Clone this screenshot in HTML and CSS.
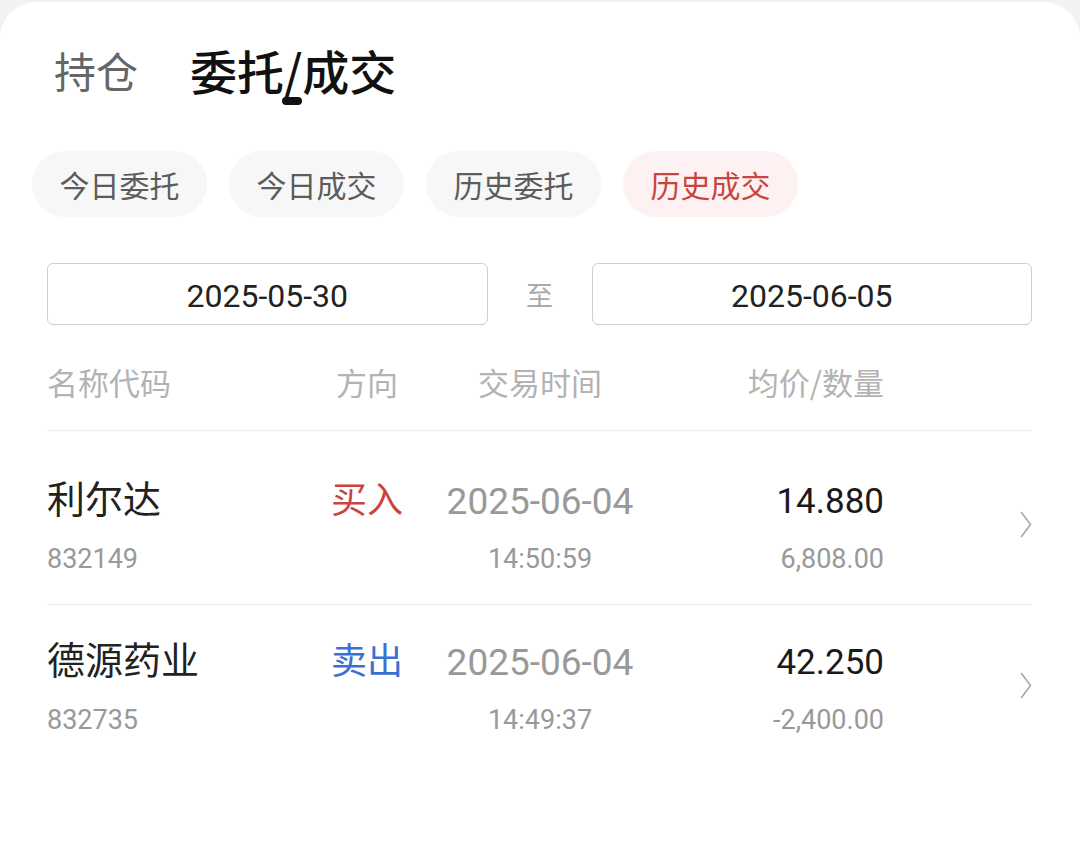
FILE: index.html
```html
<!DOCTYPE html>
<html lang="zh-CN">
<head>
    <meta charset="UTF-8">
    <meta name="viewport" content="width=device-width, initial-scale=1.0">
    <title>委托/成交</title>
    <link rel="stylesheet" href="styles.css">
</head>
<body>
    <div class="card">
        <div class="tabs">
            <div class="tab">持仓</div>
            <div class="tab active">委托/成交</div>
        </div>

        <div class="chips">
            <div class="chip">今日委托</div>
            <div class="chip">今日成交</div>
            <div class="chip">历史委托</div>
            <div class="chip active">历史成交</div>
        </div>

        <div class="date-range">
            <div class="date-box">2025-05-30</div>
            <div class="date-sep">至</div>
            <div class="date-box">2025-06-05</div>
        </div>

        <div class="table-head">
            <div class="col-name">名称代码</div>
            <div class="col-dir">方向</div>
            <div class="col-time">交易时间</div>
            <div class="col-price">均价/数量</div>
            <div></div>
        </div>

        <div class="list">
            <div class="row">
                <div class="col-name">
                    <div class="name">利尔达</div>
                    <div class="sub">832149</div>
                </div>
                <div class="col-dir"><span class="dir buy">买入</span></div>
                <div class="col-time">
                    <div class="date">2025-06-04</div>
                    <div class="sub">14:50:59</div>
                </div>
                <div class="col-price">
                    <div class="price">14.880</div>
                    <div class="sub">6,808.00</div>
                </div>
                <div class="col-arrow">
                    <svg width="12" height="27" viewBox="0 0 12 27"><path d="M1.5 1.5 L10.5 13.5 L1.5 25.5" fill="none" stroke="#a8a8a8" stroke-width="1.6" stroke-linecap="round" stroke-linejoin="round"/></svg>
                </div>
            </div>
            <div class="row">
                <div class="col-name">
                    <div class="name">德源药业</div>
                    <div class="sub">832735</div>
                </div>
                <div class="col-dir"><span class="dir sell">卖出</span></div>
                <div class="col-time">
                    <div class="date">2025-06-04</div>
                    <div class="sub">14:49:37</div>
                </div>
                <div class="col-price">
                    <div class="price">42.250</div>
                    <div class="sub">-2,400.00</div>
                </div>
                <div class="col-arrow">
                    <svg width="12" height="27" viewBox="0 0 12 27"><path d="M1.5 1.5 L10.5 13.5 L1.5 25.5" fill="none" stroke="#a8a8a8" stroke-width="1.6" stroke-linecap="round" stroke-linejoin="round"/></svg>
                </div>
            </div>
        </div>
    </div>
</body>
</html>
```

FILE: styles.css
```css
body {
    margin: 0;
    background: #f1f2f4;
    font-family: "Noto Sans CJK SC", "Noto Sans", sans-serif;
}
.card {
    margin-top: 2px;
    min-height: 866px;
    background: #fff;
    border-radius: 36px 36px 0 0;
    box-sizing: border-box;
    padding: 40px 48px 0 47px;
}
.tabs {
    display: flex;
    align-items: center;
    gap: 52px;
    padding-left: 7px;
}
.tab {
    position: relative;
    font-size: 42px;
    line-height: 56px;
    color: #666;
}
.tab.active {
    font-size: 47px;
    color: #111;
    font-weight: 500;
}
.tab.active::after {
    content: "";
    position: absolute;
    left: 92px;
    top: 55px;
    width: 20px;
    height: 8px;
    border-radius: 4px;
    background: #111;
}
.chips {
    display: flex;
    gap: 22px;
    margin: 53px 0 0 -15px;
}
.chip {
    width: 175px;
    height: 66px;
    border-radius: 33px;
    background: #f7f7f7;
    color: #5c5c5c;
    font-size: 30px;
    display: flex;
    align-items: center;
    justify-content: center;
}
.chip.active {
    background: #fdf2f1;
    color: #c8453f;
}
.date-range {
    display: flex;
    align-items: center;
    margin-top: 46px;
}
.date-box {
    flex: 1;
    height: 62px;
    box-sizing: border-box;
    border: 1px solid #cfcfcf;
    border-radius: 6px;
    padding-top: 4px;
    display: flex;
    align-items: center;
    justify-content: center;
    font-family: Roboto, sans-serif;
    font-size: 32px;
    color: #222;
}
.date-sep {
    width: 104px;
    text-align: center;
    font-size: 27px;
    color: #aaa;
}
.table-head, .row {
    display: grid;
    grid-template-columns: 253px 134px 212px 238px 1fr;
}
.table-head {
    margin-top: 37px;
    padding-bottom: 28px;
    border-bottom: 1px solid #eee;
    font-size: 31px;
    line-height: 40px;
    color: #b3b3b3;
}
.col-dir, .col-time {
    text-align: center;
}
.col-price {
    text-align: right;
}
.list {
    margin-top: 13px;
}
.row {
    padding: 29px 0 28px;
}
.row + .row {
    border-top: 1px solid #eee;
}
.name {
    font-size: 38px;
    line-height: 48px;
    color: #222;
}
.sub {
    margin-top: 21px;
    font-family: Roboto, sans-serif;
    font-size: 27px;
    line-height: 34px;
    color: #999;
}
.dir {
    font-size: 36px;
    line-height: 48px;
}
.dir.buy {
    color: #c9433f;
}
.dir.sell {
    color: #3a70d3;
}
.date, .price {
    padding-top: 5px;
    font-family: Roboto, sans-serif;
    line-height: 48px;
}
.date {
    font-size: 37px;
    color: #999;
}
.price {
    font-size: 35px;
    color: #1a1a1a;
}
.col-time .sub, .col-price .sub {
    margin-top: 16px;
}
.col-arrow {
    display: flex;
    align-items: center;
    justify-content: flex-end;
}
```
